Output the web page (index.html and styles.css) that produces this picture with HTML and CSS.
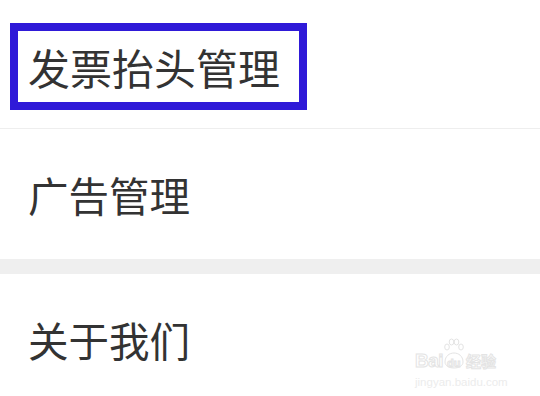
FILE: index.html
```html
<!DOCTYPE html>
<html lang="zh-CN">
<head>
    <meta charset="UTF-8">
    <meta name="viewport" content="width=device-width, initial-scale=1.0">
    <title>设置</title>
    <link rel="stylesheet" href="styles.css">
</head>
<body>
    <div class="list">
        <div class="item first">
            <span class="marked">发票抬头管理</span>
        </div>
        <div class="item">广告管理</div>
    </div>
    <div class="band"></div>
    <div class="list">
        <div class="item">关于我们</div>
    </div>

    <div class="watermark">
        <div class="wm-logo">
            <span class="bai">Bai</span>
            <span class="du-wrap">
                <svg class="paw" width="22" height="36" viewBox="0 0 22 36">
                    <g fill="none" stroke="#e4e4e4" stroke-width="1">
                        <ellipse cx="4" cy="9" rx="2.3" ry="3"/>
                        <ellipse cx="8.5" cy="4" rx="2.3" ry="3"/>
                        <ellipse cx="13.5" cy="4" rx="2.3" ry="3"/>
                        <ellipse cx="18" cy="9" rx="2.3" ry="3"/>
                        <path d="M2 24 C2 12 20 12 20 24 C20 32 2 32 2 24 Z"/>
                    </g>
                </svg>
                <span class="du">du</span>
            </span>
            <span class="jy">经验</span>
        </div>
        <div class="wm-url">jingyan.baidu.com</div>
    </div>
</body>
</html>
```

FILE: styles.css
```css
body {
    margin: 0;
    background-color: #ffffff;
    font-family: 'Noto Sans CJK SC', 'Noto Sans', sans-serif;
    color: #333333;
    position: relative;
    height: 396px;
    overflow: hidden;
}
.list {
    background-color: #ffffff;
}
.item {
    height: 130px;
    display: flex;
    align-items: center;
    padding-left: 28px;
    font-size: 40.5px;
}
.item.first {
    box-sizing: border-box;
    height: 129px;
    padding: 4px 0 0 10px;
    border-bottom: 1px solid #eeeeee;
    font-size: 42px;
}
.marked {
    display: inline-block;
    border: 8px solid #2f1ad8;
    padding: 0 19px 0 10px;
    line-height: 71px;
}
.band {
    height: 15px;
    background-color: #efefef;
}
.watermark {
    position: absolute;
    left: 415px;
    top: 336px;
    width: 100px;
    font-family: 'Liberation Sans', sans-serif;
    font-weight: bold;
    color: transparent;
    -webkit-text-stroke: 1px #e4e4e4;
}
.wm-logo {
    display: flex;
    align-items: flex-end;
    height: 34px;
}
.bai {
    font-size: 19px;
    line-height: 19px;
    letter-spacing: -0.5px;
}
.du-wrap {
    position: relative;
    width: 22px;
    height: 36px;
}
.paw {
    position: absolute;
    left: 0;
    bottom: -4px;
}
.du {
    position: absolute;
    left: 4px;
    bottom: 1px;
    font-size: 11px;
}
.jy {
    margin-left: 1px;
    font-size: 15px;
    line-height: 18px;
    font-family: 'Noto Sans CJK SC', sans-serif;
}
.wm-url {
    margin-top: 6px;
    font-size: 11.5px;
    font-weight: normal;
    color: #ececec;
    -webkit-text-stroke: 0;
}
```
